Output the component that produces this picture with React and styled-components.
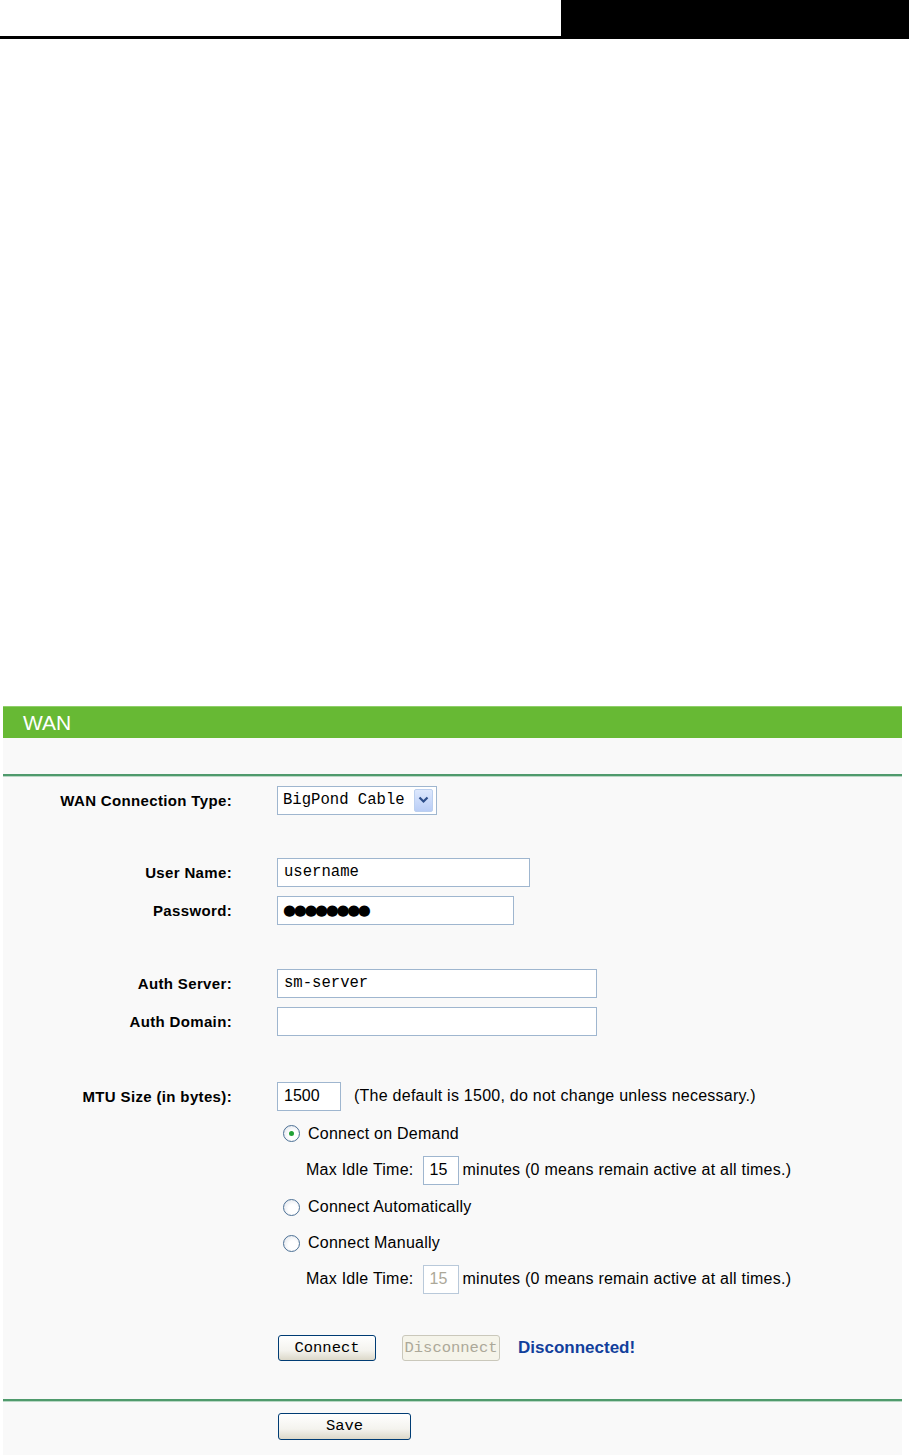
import React from "react";
import styled, { createGlobalStyle } from "styled-components";

const GlobalStyle = createGlobalStyle`
  html, body {
    margin: 0;
    padding: 0;
    background: #ffffff;
  }
  body {
    font-family: "Liberation Sans", Arial, sans-serif;
    color: #000;
  }
`;

const ChevronIcon = () => (
  <svg width="11" height="8" viewBox="0 0 11 8">
    <path d="M1.5 1.5 L5.5 5.5 L9.5 1.5" fill="none" stroke="#2d4e8a" strokeWidth="2.2" />
  </svg>
);

const App = () => {
  return (
    <Page>
      <GlobalStyle />
      <TopBar>
        <div className="left" />
        <div className="right" />
      </TopBar>

      <Panel>
        <PanelTitle>WAN</PanelTitle>
        <Divider $mt={36} />

        <Row $h={38} $mt={4}>
          <Label>WAN Connection Type:</Label>
          <Field>
            <Select>
              <span>BigPond Cable</span>
              <SelectButton>
                <ChevronIcon />
              </SelectButton>
            </Select>
          </Field>
        </Row>

        <Row $h={38} $mt={34}>
          <Label>User Name:</Label>
          <Field>
            <TextInput $w={253} readOnly value="username" />
          </Field>
        </Row>
        <Row $h={38}>
          <Label>Password:</Label>
          <Field>
            <TextInput $w={237} $dots readOnly value="●●●●●●●●" />
          </Field>
        </Row>

        <Row $h={38} $mt={35}>
          <Label>Auth Server:</Label>
          <Field>
            <TextInput $w={320} readOnly value="sm-server" />
          </Field>
        </Row>
        <Row $h={38}>
          <Label>Auth Domain:</Label>
          <Field>
            <TextInput $w={320} readOnly value="" />
          </Field>
        </Row>

        <Row $h={38} $mt={37}>
          <Label>MTU Size (in bytes):</Label>
          <Field $gap={13}>
            <TextInput $w={64} $sans readOnly value="1500" />
            <Text>(The default is 1500, do not change unless necessary.)</Text>
          </Field>
        </Row>

        <Row $h={37}>
          <span />
          <Field $indent={6} $gap={8}>
            <Radio $checked />
            <Text>Connect on Demand</Text>
          </Field>
        </Row>
        <Row $h={36}>
          <span />
          <Field $indent={29} $gap={4}>
            <Text>Max Idle Time:</Text>
            <TextInput $w={36} $sans $ml={5} readOnly value="15" />
            <Text>minutes (0 means remain active at all times.)</Text>
          </Field>
        </Row>
        <Row $h={38}>
          <span />
          <Field $indent={6} $gap={8}>
            <Radio />
            <Text>Connect Automatically</Text>
          </Field>
        </Row>
        <Row $h={34}>
          <span />
          <Field $indent={6} $gap={8}>
            <Radio />
            <Text>Connect Manually</Text>
          </Field>
        </Row>
        <Row $h={38}>
          <span />
          <Field $indent={29} $gap={4}>
            <Text>Max Idle Time:</Text>
            <TextInput $w={36} $sans $ml={5} disabled readOnly value="15" />
            <Text>minutes (0 means remain active at all times.)</Text>
          </Field>
        </Row>

        <Row $h={38} $mt={31}>
          <span />
          <Field $indent={1} $gap={0}>
            <Button $w={98}>Connect</Button>
            <Button $w={98} $ml={26} disabled>
              Disconnect
            </Button>
            <Status>Disconnected!</Status>
          </Field>
        </Row>

        <Divider $mt={32} />

        <Row $h={38} $mt={5}>
          <span />
          <Field $indent={1}>
            <Button $w={133} $h={27}>Save</Button>
          </Field>
        </Row>
        <Bottom />
      </Panel>
    </Page>
  );
};

export default App;

const Page = styled.div`
  width: 909px;
  min-height: 1455px;
  background: #ffffff;
`;

const TopBar = styled.div`
  display: flex;
  height: 39px;

  .left {
    flex: 0 0 561px;
    box-sizing: border-box;
    border-bottom: 3px solid #000;
  }

  .right {
    flex: 1;
    background: #000;
  }
`;

const Panel = styled.div`
  margin: 667px 0 0 3px;
  width: 899px;
  background: #f9f9f9;
`;

const PanelTitle = styled.div`
  height: 32px;
  display: flex;
  align-items: center;
  padding-left: 20px;
  background: #67b934;
  border-top: 1px solid #8fcf6a;
  box-sizing: border-box;
  color: #ffffff;
  font-family: "Liberation Sans", Arial, sans-serif;
  font-size: 21px;
`;

const Divider = styled.div`
  margin-top: ${({ $mt }) => $mt}px;
  height: 2px;
  background: #4f9a6c;
  border-bottom: 1px solid #b9d8c5;
`;

const Row = styled.div`
  display: grid;
  grid-template-columns: 229px 1fr;
  column-gap: 45px;
  align-items: center;
  height: ${({ $h }) => $h}px;
  margin-top: ${({ $mt = 0 }) => $mt}px;
`;

const Label = styled.div`
  text-align: right;
  font-family: "Liberation Sans", Arial, sans-serif;
  font-weight: 700;
  font-size: 15px;
  letter-spacing: 0.35px;
  color: #000;
`;

const Field = styled.div`
  display: flex;
  align-items: center;
  gap: ${({ $gap = 8 }) => $gap}px;
  padding-left: ${({ $indent = 0 }) => $indent}px;
`;

const Text = styled.span`
  font-family: "Liberation Sans", Arial, sans-serif;
  font-size: 16px;
  letter-spacing: 0.25px;
  color: #000;
  white-space: nowrap;
`;

const TextInput = styled.input`
  box-sizing: border-box;
  width: ${({ $w }) => $w}px;
  height: 29px;
  margin: 0 0 0 ${({ $ml = 0 }) => $ml}px;
  padding: 0 0 0 ${({ $dots }) => ($dots ? 5 : 6)}px;
  border: 1px solid #9fb6cf;
  background: #ffffff;
  outline: none;
  color: #000;
  font-family: ${({ $sans, $dots }) =>
    $dots
      ? `"DejaVu Sans", sans-serif`
      : $sans
      ? `"Liberation Sans", Arial, sans-serif`
      : `"Liberation Mono", "Courier New", monospace`};
  font-size: ${({ $sans, $dots }) => ($dots ? "15px" : $sans ? "16px" : "15.6px")};
  letter-spacing: ${({ $dots }) => ($dots ? "-2.4px" : "0")};

  &:disabled {
    color: #aca899;
    background: #ffffff;
    border-color: #b9c9da;
  }
`;

const Select = styled.div`
  box-sizing: border-box;
  width: 160px;
  height: 29px;
  display: flex;
  align-items: center;
  justify-content: space-between;
  padding: 0 3px 0 5px;
  border: 1px solid #9fb6cf;
  background: #ffffff;
  font-family: "Liberation Mono", "Courier New", monospace;
  font-size: 15.6px;
  color: #000;
`;

const SelectButton = styled.div`
  width: 19px;
  height: 23px;
  display: flex;
  align-items: center;
  justify-content: center;
  border: 1px solid #bcd0ef;
  border-radius: 2px;
  background: linear-gradient(#dde8fd, #b9cdf6);
  box-sizing: border-box;
`;

const Radio = styled.span`
  position: relative;
  width: 17px;
  height: 17px;
  flex: 0 0 17px;
  border-radius: 50%;
  border: 1.5px solid #4d7196;
  background: radial-gradient(circle at 60% 60%, #ffffff 35%, #d9dee6 100%);
  box-sizing: border-box;

  &::after {
    content: "";
    display: ${({ $checked }) => ($checked ? "block" : "none")};
    position: absolute;
    left: 4.5px;
    top: 4.5px;
    width: 5px;
    height: 5px;
    border-radius: 50%;
    background: #22a236;
  }
`;

const Button = styled.button`
  box-sizing: border-box;
  width: ${({ $w }) => $w}px;
  height: ${({ $h = 26 }) => $h}px;
  margin-left: ${({ $ml = 0 }) => $ml}px;
  padding: 0;
  border: 1px solid #003c74;
  border-radius: 3px;
  background: linear-gradient(#ffffff 0%, #f4f3ee 60%, #dcd8c9 100%);
  font-family: "Liberation Mono", "Courier New", monospace;
  font-size: 15.5px;
  color: #000;

  &:disabled {
    border-color: #cac8bb;
    background: #f5f4ea;
    color: #aca899;
  }
`;

const Status = styled.span`
  margin-left: 18px;
  font-family: "Liberation Sans", Arial, sans-serif;
  font-weight: 700;
  font-size: 17px;
  color: #123f9c;
`;

const Bottom = styled.div`
  height: 14px;
`;
